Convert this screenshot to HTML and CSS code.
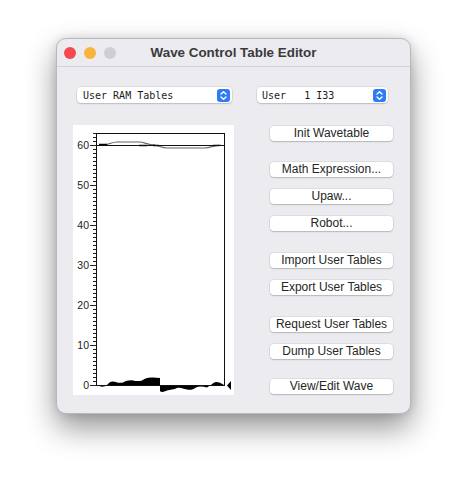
FILE: index.html
```html
<!DOCTYPE html>
<html lang="en">
<head>
  <meta charset="UTF-8">
  <title>Wave Control Table Editor</title>
  <link rel="stylesheet" href="styles.css">
</head>
<body>
  <div class="window">
    <div class="titlebar">
      <div class="lights">
        <span class="light red"></span>
        <span class="light yellow"></span>
        <span class="light grey"></span>
      </div>
      <div class="title">Wave Control Table Editor</div>
    </div>

    <div class="popups">
      <div class="popup popup-bank">
        <span class="popup-text">User RAM Tables</span>
        <span class="stepper">
          <svg width="13" height="13" viewBox="0 0 13 13">
            <path d="M4 5 L6.5 2.8 L9 5 M4 8 L6.5 10.2 L9 8" fill="none" stroke="#fff" stroke-width="1.4" stroke-linecap="round" stroke-linejoin="round"/>
          </svg>
        </span>
      </div>
      <div class="popup popup-table">
        <span class="popup-text">User   1 I33</span>
        <span class="stepper">
          <svg width="13" height="13" viewBox="0 0 13 13">
            <path d="M4 5 L6.5 2.8 L9 5 M4 8 L6.5 10.2 L9 8" fill="none" stroke="#fff" stroke-width="1.4" stroke-linecap="round" stroke-linejoin="round"/>
          </svg>
        </span>
      </div>
    </div>

    <div class="main">
      <div class="chart">
        <svg width="161" height="270" viewBox="0 0 161 270">
          <defs>
            <pattern id="ticks" x="0" y="0" width="3" height="4" patternUnits="userSpaceOnUse">
              <rect x="0" y="0" width="3" height="1" fill="#222"/>
            </pattern>
          </defs>
          <rect x="20" y="8" width="3" height="253" fill="url(#ticks)"/>
          <path d="M17 20.5 h6 M17 60.5 h6 M17 100.5 h6 M17 140.5 h6 M17 180.5 h6 M17 220.5 h6 M17 260.5 h6" stroke="#222" stroke-width="1"/>
          <g class="axis-label">
            <text x="16" y="24">60</text>
            <text x="16" y="64">50</text>
            <text x="16" y="104">40</text>
            <text x="16" y="144">30</text>
            <text x="16" y="184">20</text>
            <text x="16" y="224">10</text>
            <text x="16" y="264">0</text>
          </g>

          <!-- wave at 60, outline only -->
          <path d="M30 20 C36 20 38 17 44 17 L66 17 C72 17 74 20 82 20" fill="none" stroke="#666" stroke-width="1.2"/>
          <path d="M80 20 C86 20 88 23 94 23 L132 23 C138 23 140 20 148 20" fill="none" stroke="#666" stroke-width="1.2"/>
          <path d="M26 19.5 h8 M66 20.5 h8 M80 20.5 h6 M140 20.5 h6" stroke="#000" stroke-width="1.5"/>

          <!-- wave at 0, filled -->
          <path d="M23 260 C26 261 28 262 31 261.5 C33 261 34 260 35 259 C37 256 40 256 43 257 C45 258 47 258 50 257.5 C53 256 56 255 60 255.5 C63 256 66 256.5 69 255.5 C72 253 76 252 80 252.5 L87 253 L87 260 Z" fill="#000"/>
          <path d="M87 260 L87 266 C88 267.5 91 267 94 265.5 C97 264.5 101 264.5 104 263 C107 262 110 263.5 114 264.5 C117 265 120 265 123 262.5 C126 261 130 261.5 134 262.5 C137 261 140 257.5 143 257 C146 257 148 258 151 260 Z" fill="#000"/>

          <path d="M23.5 8 V261" stroke="#111" stroke-width="1"/>
          <path d="M23 8.5 H152" stroke="#111" stroke-width="1"/>
          <path d="M151.5 8 V261" stroke="#111" stroke-width="1"/>
          <path d="M23 20.5 H152" stroke="#111" stroke-width="1"/>
          <path d="M23 260.5 H152" stroke="#111" stroke-width="1"/>
          <polygon points="154,260.5 158,256 158,265" fill="#000"/>
        </svg>
      </div>

      <div class="buttons">
        <div class="btn-group first">
          <button class="btn">Init Wavetable</button>
        </div>
        <div class="btn-group">
          <button class="btn">Math Expression...</button>
          <button class="btn">Upaw...</button>
          <button class="btn">Robot...</button>
        </div>
        <div class="btn-group">
          <button class="btn">Import User Tables</button>
          <button class="btn">Export User Tables</button>
        </div>
        <div class="btn-group">
          <button class="btn">Request User Tables</button>
          <button class="btn">Dump User Tables</button>
        </div>
        <div class="btn-group last">
          <button class="btn">View/Edit Wave</button>
        </div>
      </div>
    </div>
  </div>
</body>
</html>
```

FILE: styles.css
```css
/* General Styles */
html {
  background-color: #fff;
}

body {
  margin: 0;
  padding: 38px 0 60px 56px;
  font-family: 'Liberation Sans', Arial, sans-serif;
  color: #222;
}

.window {
  width: 355px;
  height: 376px;
  box-sizing: border-box;
  background-color: #ecebf0;
  border: 1px solid #b9b8bc;
  border-radius: 10px;
  box-shadow: 0 14px 30px rgba(0, 0, 0, 0.42), 0 0 10px rgba(0, 0, 0, 0.12);
}

.titlebar {
  display: grid;
  grid-template-columns: 1fr auto 1fr;
  align-items: center;
  height: 27px;
  border-bottom: 1px solid #d3d2d7;
}

.lights {
  display: flex;
  gap: 8px;
  padding-left: 7px;
}

.light {
  width: 12px;
  height: 12px;
  border-radius: 50%;
}

.light.red { background-color: #f4494e; }
.light.yellow { background-color: #f8b43b; }
.light.grey { background-color: #cfced2; }

.title {
  font-size: 13.4px;
  font-weight: bold;
  color: #3a3a3c;
}

/* popups */
.popups {
  display: flex;
  gap: 25px;
  margin-top: 20px;
  padding-left: 20px;
}

.popup {
  display: flex;
  align-items: center;
  justify-content: space-between;
  height: 16px;
  padding: 0 2px 0 6px;
  box-sizing: border-box;
  background-color: #fff;
  border-radius: 4px;
  box-shadow: 0 0 0 0.5px rgba(0, 0, 0, 0.12), 0 1px 1.5px rgba(0, 0, 0, 0.15);
}

.popup-bank { width: 155px; }
.popup-table { width: 131px; padding-left: 5px; }

.popup-text {
  font-family: 'DejaVu Sans Mono', 'Liberation Mono', monospace;
  font-size: 10px;
  white-space: pre;
  color: #1c1c1c;
}

.stepper {
  display: flex;
  width: 13px;
  height: 13px;
  border-radius: 3px;
  background-color: #2f7bf5;
}

/* main area */
.main {
  display: flex;
  gap: 36px;
  margin-top: 22px;
  padding-left: 16px;
}

.chart {
  width: 161px;
  height: 270px;
  background-color: #fff;
}

.chart svg {
  display: block;
}

.axis-label text {
  font-family: 'Liberation Sans', Arial, sans-serif;
  font-size: 10.5px;
  fill: #222;
  text-anchor: end;
}

.buttons {
  display: flex;
  flex-direction: column;
  padding-top: 1px;
}

.btn-group {
  display: flex;
  flex-direction: column;
  gap: 12px;
  margin-top: 22px;
}

.btn-group.first { margin-top: 0; }
.btn-group:nth-child(2) { margin-top: 21px; }
.btn-group.last { margin-top: 20px; }

.btn {
  width: 123px;
  height: 15px;
  padding: 0;
  border: none;
  border-radius: 4px;
  background-color: #fff;
  box-shadow: 0 0 0 0.5px rgba(0, 0, 0, 0.12), 0 1px 1.5px rgba(0, 0, 0, 0.18);
  font-family: 'Liberation Sans', Arial, sans-serif;
  font-size: 12px;
  color: #262626;
  line-height: 15px;
}
```
